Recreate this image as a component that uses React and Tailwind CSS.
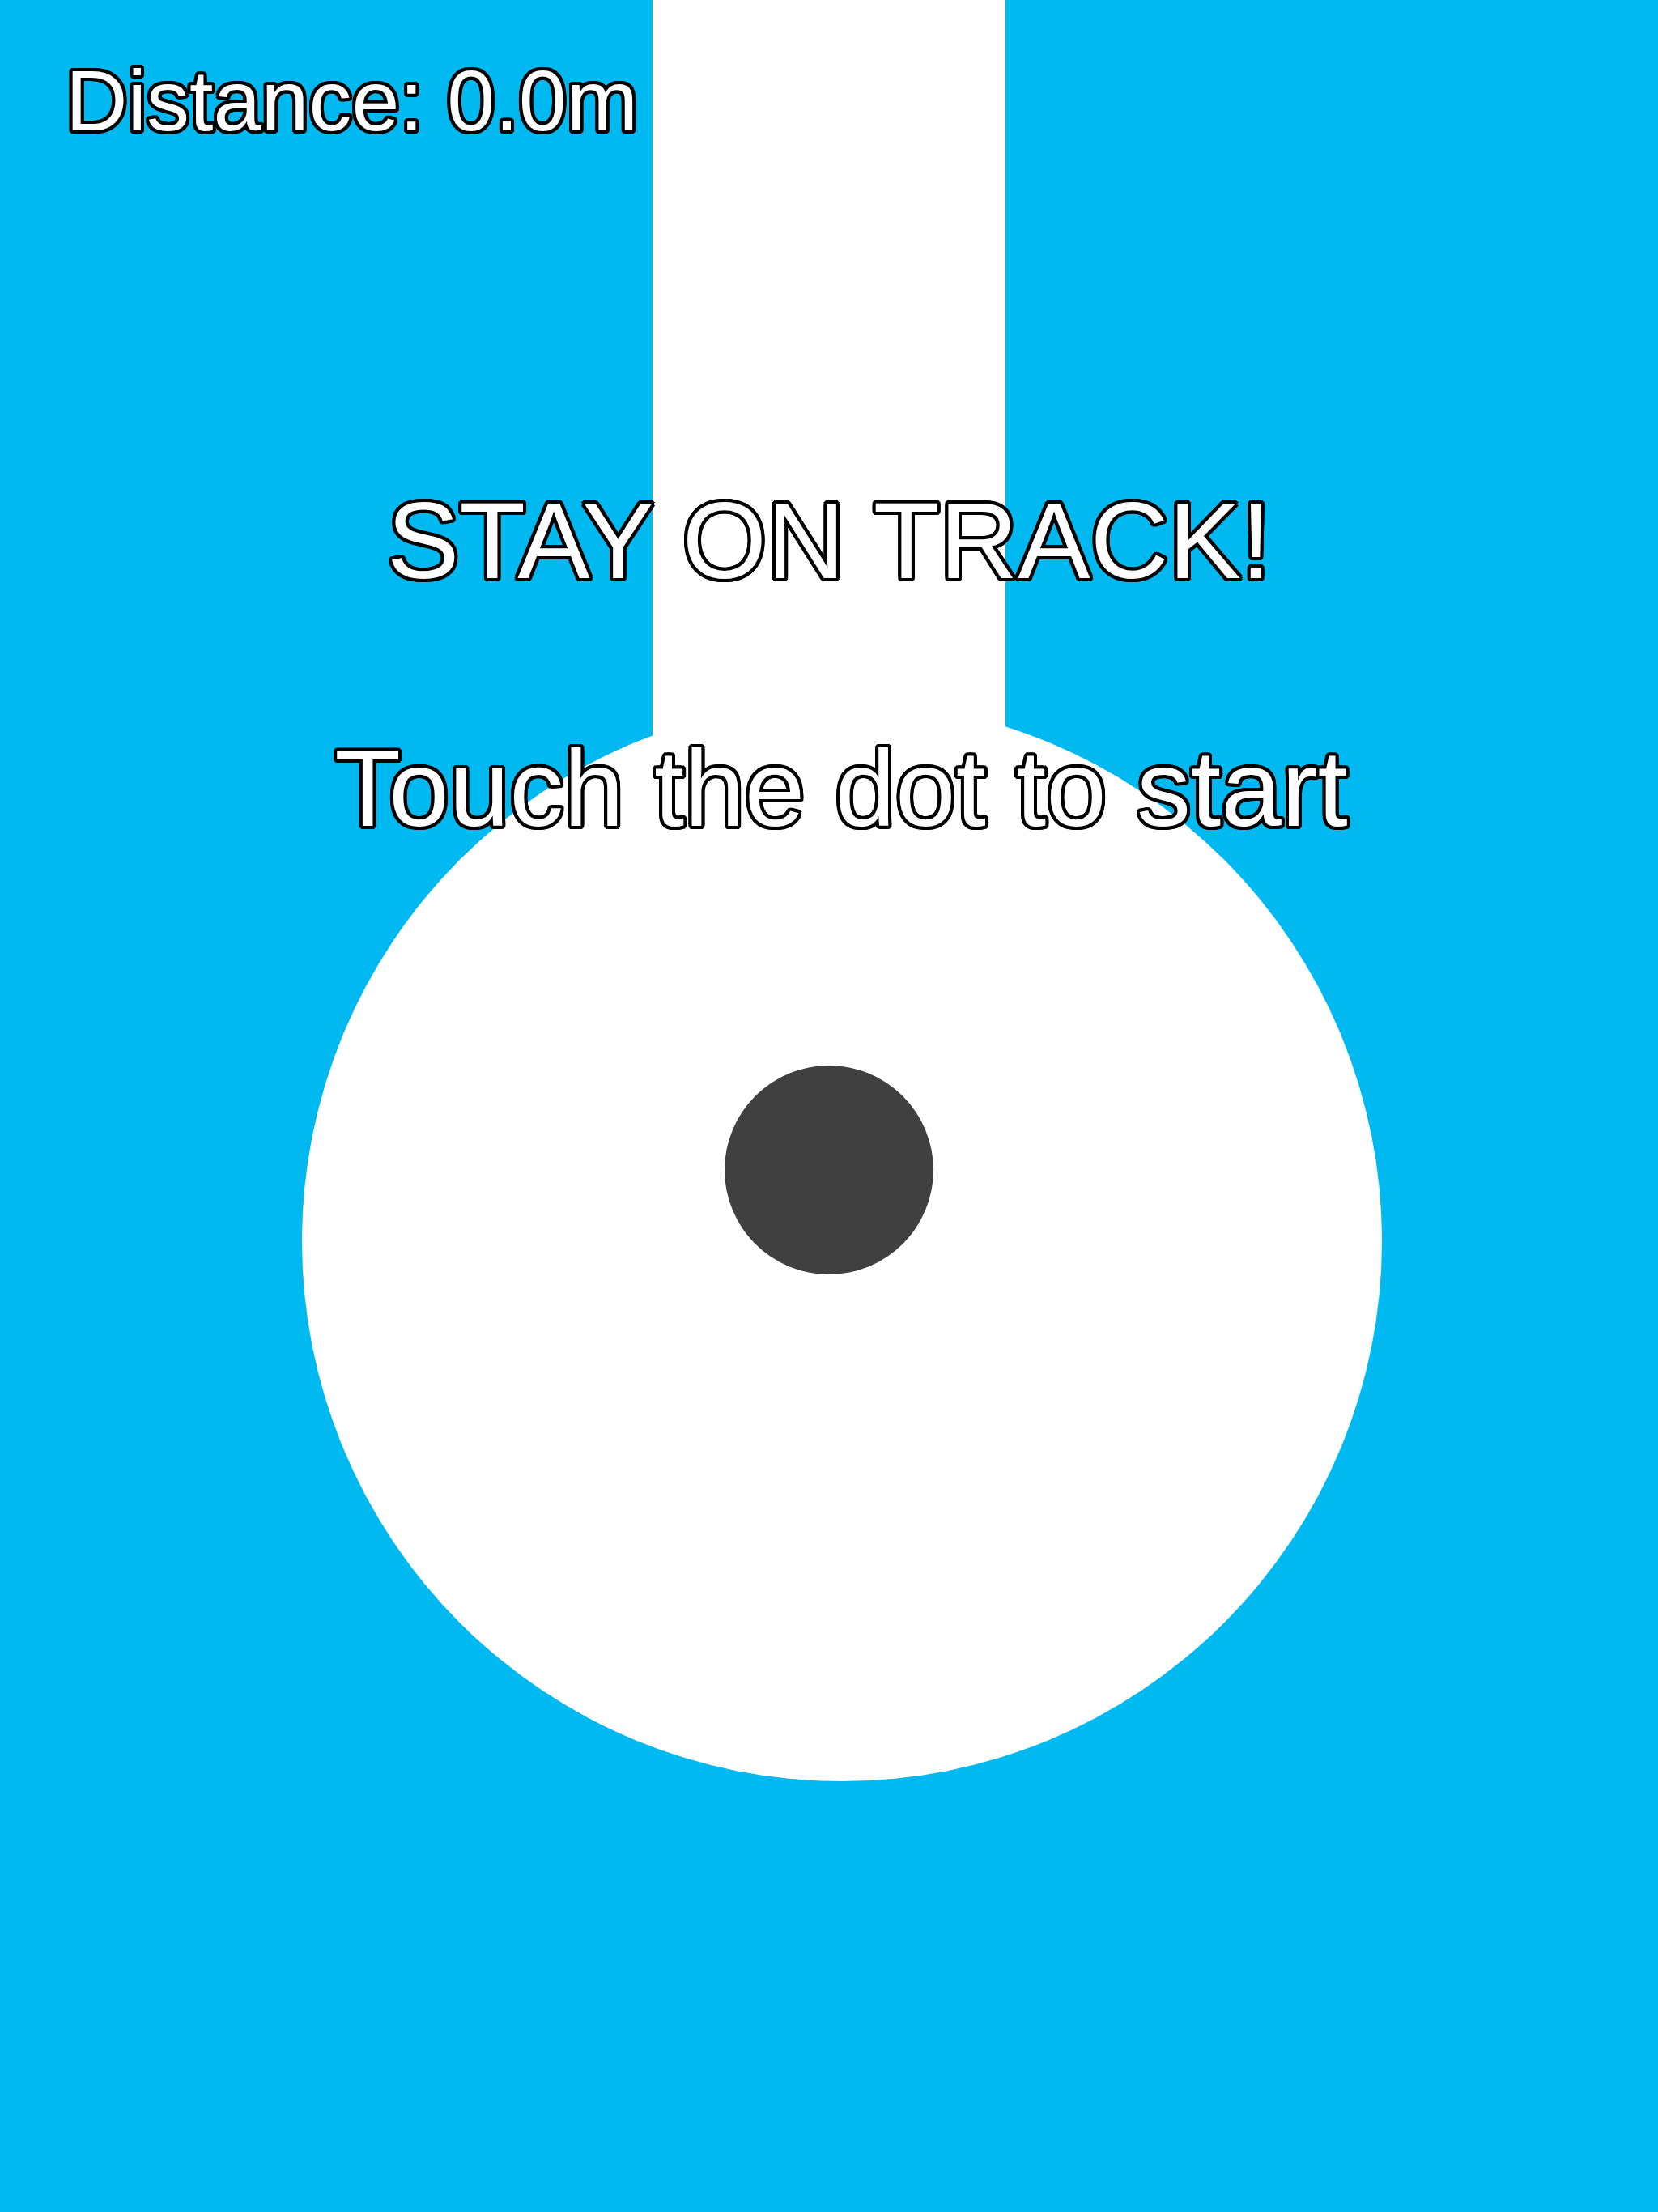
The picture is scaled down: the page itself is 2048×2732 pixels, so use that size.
import React from 'react'

const outline =
  "font-['Liberation_Sans',Arial,sans-serif] text-white leading-none whitespace-nowrap [text-shadow:4px_0_#000,-4px_0_#000,0_4px_#000,0_-4px_#000,3px_3px_#000,-3px_3px_#000,3px_-3px_#000,-3px_-3px_#000,4px_2px_#000,-4px_2px_#000,4px_-2px_#000,-4px_-2px_#000,2px_4px_#000,-2px_4px_#000,2px_-4px_#000,-2px_-4px_#000]"

function Track() {
  return (
    <div className="absolute inset-0">
      {/* straight lane coming down from the top */}
      <div className="absolute left-[806px] top-0 w-[436px] h-[1533px] bg-white" />
      {/* start pad */}
      <div className="absolute left-[373px] top-[866px] w-[1334px] h-[1334px] rounded-full bg-white" />
      {/* the dot */}
      <div className="absolute left-[895px] top-[1316px] w-[258px] h-[258px] rounded-full bg-[#404040]" />
    </div>
  )
}

export default function App() {
  const distance = 0

  return (
    <div className="relative w-full h-[2732px] overflow-hidden bg-[#00b9f0]">
      <Track />

      {/* HUD */}
      <div className="relative flex flex-col pt-[71px]">
        <div className={`${outline} pl-[81px] text-[106px]`}>
          Distance: {distance.toFixed(1)}m
        </div>
        <div className="flex flex-col items-center mt-[424px]">
          <div className={`${outline} text-[134px]`}>STAY ON TRACK!</div>
          <div className={`${outline} text-[134px] mt-[172px] pl-[30px]`}>Touch the dot to start</div>
        </div>
      </div>
    </div>
  )
}
